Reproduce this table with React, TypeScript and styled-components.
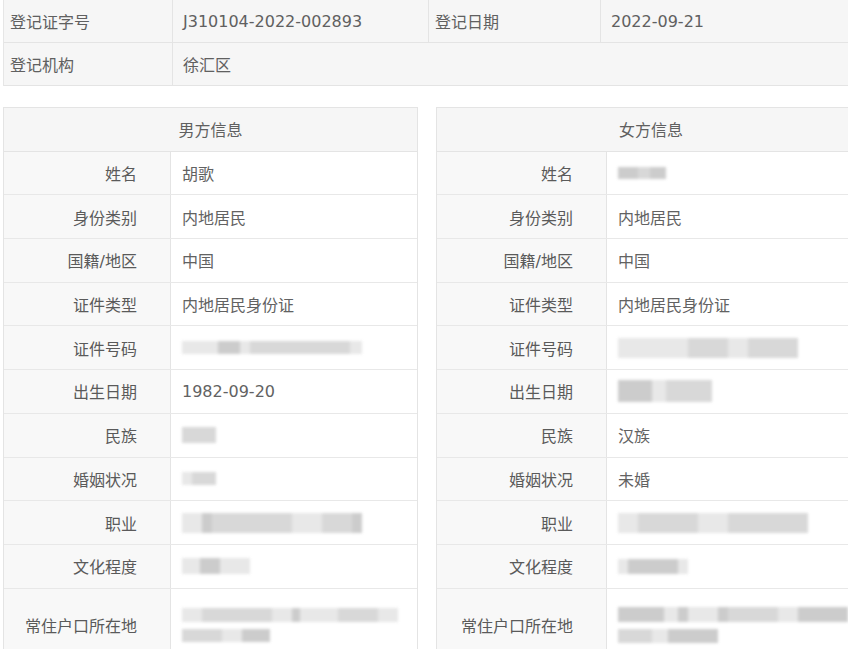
import styled, { createGlobalStyle } from "styled-components";

const GlobalStyle = createGlobalStyle`
	body {
		margin: 0;
		background: #ffffff;
		font-family: "DejaVu Sans", "Noto Sans CJK SC", sans-serif;
		color: #5c5c5c;
		overflow: hidden;
	}
`;

const Page = styled.div`
	width: 848px;
	height: 649px;
	overflow: hidden;
	padding: 0 0 0 3px;
	box-sizing: border-box;
`;

const TopTable = styled.div`
	display: grid;
	grid-template-columns: 169px 256px 172px 1fr;
	margin-top: -1px;
	width: 860px;
	background: #f6f6f6;
	border-top: 1px solid #e6e6e6;
	border-left: 1px solid #e6e6e6;
`;

const TopCell = styled.div<{ $span?: number }>`
	display: flex;
	align-items: center;
	height: 42px;
	padding-left: 6px;
	font-size: 16px;
	color: #606060;
	border-right: 1px solid #e4e4e4;
	border-bottom: 1px solid #e4e4e4;
	grid-column: span ${(p) => p.$span || 1};

	&:nth-child(even) {
		padding-left: 10px;
	}
`;

const Columns = styled.div`
	display: grid;
	grid-template-columns: 415px 430px;
	column-gap: 18px;
	margin-top: 21px;
`;

const Card = styled.div`
	border-top: 1px solid #e4e4e4;
	border-left: 1px solid #e4e4e4;
	border-right: 1px solid #e4e4e4;
`;

const CardHeader = styled.div`
	display: flex;
	justify-content: center;
	align-items: center;
	height: 42.7px;
	background: #f6f6f6;
	border-bottom: 1px solid #e4e4e4;
	font-size: 16px;
	color: #606060;
`;

const Row = styled.div<{ $tall?: boolean; $labelWidth: number }>`
	display: grid;
	grid-template-columns: ${(p) => p.$labelWidth}px 1fr;
	height: ${(p) => (p.$tall ? "72px" : "42.7px")};
	border-bottom: 1px solid #e8e8e8;
`;

const Label = styled.div`
	display: flex;
	justify-content: flex-end;
	align-items: center;
	padding-right: 33px;
	background: #f8f8f8;
	border-right: 1px solid #e4e4e4;
	font-size: 16px;
	color: #5a5a5a;
`;

const Value = styled.div`
	display: flex;
	flex-direction: column;
	justify-content: center;
	gap: 7px;
	padding-left: 11px;
	font-size: 16px;
	color: #626262;
	background: #ffffff;
`;

const Smudge = styled.div<{ $w: number; $h: number }>`
	width: ${(p) => p.$w}px;
	height: ${(p) => p.$h}px;
	display: flex;
	filter: blur(1.6px);
	opacity: 0.85;
`;

const Patch = styled.div<{ $w: number; $tone: number }>`
	width: ${(p) => p.$w}px;
	height: 100%;
	background: ${(p) => ["#e4e4e4", "#d2d2d2", "#c4c4c4", "#b8b8b8"][p.$tone]};
`;

type Blot = { h: number; parts: [number, number][] };
type Cell = string | Blot[];
type Field = { label: string; value: Cell; tall?: boolean };

const Blurred = ({ lines }: { lines: Blot[] }) => (
	<>
		{lines.map((line, i) => {
			const w = line.parts.reduce((s, [pw]) => s + pw, 0);
			return (
				<Smudge key={i} $w={w} $h={line.h}>
					{line.parts.map(([pw, tone], j) => (
						<Patch key={j} $w={pw} $tone={tone} />
					))}
				</Smudge>
			);
		})}
	</>
);

const male: Field[] = [
	{ label: "姓名", value: "胡歌" },
	{ label: "身份类别", value: "内地居民" },
	{ label: "国籍/地区", value: "中国" },
	{ label: "证件类型", value: "内地居民身份证" },
	{
		label: "证件号码",
		value: [{ h: 13, parts: [[36, 0], [22, 2], [10, 0], [100, 1], [12, 0]] }],
	},
	{ label: "出生日期", value: "1982-09-20" },
	{ label: "民族", value: [{ h: 16, parts: [[34, 1]] }] },
	{ label: "婚姻状况", value: [{ h: 13, parts: [[10, 0], [24, 1]] }] },
	{
		label: "职业",
		value: [{ h: 20, parts: [[20, 0], [10, 2], [80, 1], [30, 0], [30, 1], [10, 2]] }],
	},
	{ label: "文化程度", value: [{ h: 16, parts: [[18, 0], [20, 2], [30, 0]] }] },
	{
		label: "常住户口所在地",
		tall: true,
		value: [
			{ h: 14, parts: [[20, 0], [70, 1], [20, 0], [8, 2], [38, 0], [40, 1], [20, 0]] },
			{ h: 13, parts: [[40, 1], [20, 0], [28, 2]] },
		],
	},
];

const female: Field[] = [
	{ label: "姓名", value: [{ h: 12, parts: [[20, 2], [12, 1], [16, 2]] }] },
	{ label: "身份类别", value: "内地居民" },
	{ label: "国籍/地区", value: "中国" },
	{ label: "证件类型", value: "内地居民身份证" },
	{
		label: "证件号码",
		value: [{ h: 20, parts: [[70, 0], [40, 1], [20, 0], [50, 1]] }],
	},
	{
		label: "出生日期",
		value: [{ h: 22, parts: [[34, 2], [14, 0], [46, 1]] }],
	},
	{ label: "民族", value: "汉族" },
	{ label: "婚姻状况", value: "未婚" },
	{
		label: "职业",
		value: [{ h: 20, parts: [[20, 0], [60, 1], [30, 0], [80, 1]] }],
	},
	{ label: "文化程度", value: [{ h: 15, parts: [[10, 0], [50, 2], [10, 0]] }] },
	{
		label: "常住户口所在地",
		tall: true,
		value: [
			{ h: 15, parts: [[46, 2], [14, 0], [10, 2], [30, 0], [10, 2], [50, 1], [20, 0], [50, 2]] },
			{ h: 14, parts: [[34, 1], [16, 0], [50, 2]] },
		],
	},
];

const InfoCard = ({ title, fields, labelWidth }: { title: string; fields: Field[]; labelWidth: number }) => (
	<Card>
		<CardHeader>{title}</CardHeader>
		{fields.map((f) => (
			<Row key={f.label} $tall={f.tall} $labelWidth={labelWidth}>
				<Label>{f.label}</Label>
				<Value>{typeof f.value === "string" ? f.value : <Blurred lines={f.value} />}</Value>
			</Row>
		))}
	</Card>
);

export default function App() {
	return (
		<Page>
			<GlobalStyle />
			<TopTable>
				<TopCell>登记证字号</TopCell>
				<TopCell>J310104-2022-002893</TopCell>
				<TopCell>登记日期</TopCell>
				<TopCell>2022-09-21</TopCell>
				<TopCell>登记机构</TopCell>
				<TopCell $span={3}>徐汇区</TopCell>
			</TopTable>
			<Columns>
				<InfoCard title="男方信息" fields={male} labelWidth={167} />
				<InfoCard title="女方信息" fields={female} labelWidth={170} />
			</Columns>
		</Page>
	);
}
